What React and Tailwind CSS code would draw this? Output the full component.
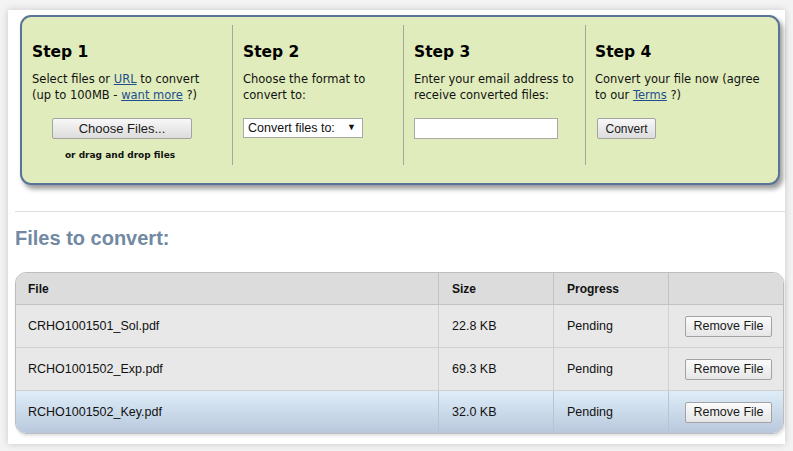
export default function App() {
  const rows = [
    { name: "CRHO1001501_Sol.pdf", size: "22.8 KB", sel: false },
    { name: "RCHO1001502_Exp.pdf", size: "69.3 KB", sel: false },
    { name: "RCHO1001502_Key.pdf", size: "32.0 KB", sel: true },
  ];
  const verdana = { fontFamily: '"DejaVu Sans", Verdana, sans-serif' };
  const arial = { fontFamily: '"Liberation Sans", Arial, sans-serif' };
  const link = "text-[#1f4f8f] underline";
  const btn =
    "flex items-center justify-center border border-[#a3a3a3] rounded-[2px] bg-gradient-to-b from-[#f8f8f8] to-[#dcdcdc] text-[#1a1a1a]";
  return (
    <div className="w-[793px] h-[451px] bg-[#f3f3f3] pt-[10px] pl-[8px]" style={arial}>
      <div className="w-[777px] h-[434px] bg-white shadow-[0_0_7px_rgba(0,0,0,0.18)] pt-[5px] flex flex-col">
        {/* Steps panel */}
        <div
          className="ml-[12px] w-[760px] h-[170px] rounded-[11px] border-2 border-[#5a7398] bg-[#e0ecbb] shadow-[3px_4px_5px_rgba(0,0,0,0.4)] flex items-start pt-[8px]"
          style={verdana}
        >
          <div className="w-[211px] h-[140px] border-r border-[#a4a89a] pl-[10px] pt-[18px]">
            <div className="text-[15.5px] leading-[18px] font-bold text-black">Step 1</div>
            <div className="mt-[10px] text-[11.5px] leading-[16px] text-[#111]">
              Select files or <span className={link}>URL</span> to convert
              <br />
              (up to 100MB - <span className={link}>want more</span> ?)
            </div>
            <div className={`${btn} mt-[15px] ml-[20px] w-[140px] h-[21px] text-[13px]`} style={arial}>
              Choose Files...
            </div>
            <div className="ml-[18px] w-[140px] text-center mt-[10px] text-[9px] leading-[12px] font-bold text-[#111]">
              or drag and drop files
            </div>
          </div>
          <div className="w-[171px] h-[140px] border-r border-[#a4a89a] pl-[10px] pt-[18px]">
            <div className="text-[15.5px] leading-[18px] font-bold text-black">Step 2</div>
            <div className="mt-[10px] text-[11.5px] leading-[16px] text-[#111]">
              Choose the format to
              <br />
              convert to:
            </div>
            <div
              className="mt-[15px] w-[120px] h-[20px] bg-white border border-[#a9a9a9] flex items-center justify-between pl-[4px] pr-[6px] text-[12.5px] text-[#111]"
              style={arial}
            >
              <span>Convert files to:</span>
              <span className="text-[9px]">▼</span>
            </div>
          </div>
          <div className="w-[182px] h-[140px] border-r border-[#a4a89a] pl-[10px] pt-[18px]">
            <div className="text-[15.5px] leading-[18px] font-bold text-black">Step 3</div>
            <div className="mt-[10px] text-[11.5px] leading-[16px] text-[#111]">
              Enter your email address to
              <br />
              receive converted files:
            </div>
            <input
              type="text"
              className="mt-[15px] block w-[144px] h-[21px] bg-white border border-[#a9a9a9] outline-none"
            />
          </div>
          <div className="flex-1 h-[140px] pl-[9px] pt-[18px]">
            <div className="text-[15.5px] leading-[18px] font-bold text-black">Step 4</div>
            <div className="mt-[10px] text-[11.5px] leading-[16px] text-[#111]">
              Convert your file now (agree
              <br />
              to our <span className={link}>Terms</span> ?)
            </div>
            <div className={`${btn} mt-[15px] ml-[2px] w-[59px] h-[21px] text-[12px]`} style={arial}>
              Convert
            </div>
          </div>
        </div>

        {/* Divider */}
        <div className="mt-[26px] ml-[7px] h-px bg-[#dddddd]" />

        {/* Heading */}
        <div className="mt-[14px] ml-[7px] text-[20px] leading-[24px] font-bold text-[#7189a3]">
          Files to convert:
        </div>

        {/* Table */}
        <div className="mt-[22px] ml-[7px] w-[769px] border border-[#bdbdbd] rounded-[11px] overflow-hidden shadow-[1px_2px_3px_rgba(0,0,0,0.12)]">
          <div className="grid grid-cols-[422px_115px_115px_1fr] h-[32px] bg-[#dcdcdc] border-b border-[#c2c2c2] text-[12px] font-bold text-[#111]">
            <div className="flex items-center pl-[12px]">File</div>
            <div className="flex items-center pl-[13px] border-l border-[#c2c2c2]">Size</div>
            <div className="flex items-center pl-[13px] border-l border-[#c2c2c2]">Progress</div>
            <div className="border-l border-[#c2c2c2]" />
          </div>
          {rows.map((r, i) => (
            <div
              key={r.name}
              className={`grid grid-cols-[422px_115px_115px_1fr] text-[12.5px] text-[#111] ${
                i < rows.length - 1 ? "h-[43px] border-b border-[#d0d0d0]" : "h-[42px]"
              } ${r.sel ? "bg-gradient-to-b from-[#deedf8] to-[#b9c8dc]" : "bg-[#e8e8e8]"}`}
            >
              <div className="flex items-center pl-[12px]">{r.name}</div>
              <div className={`flex items-center pl-[13px] border-l ${r.sel ? "border-[#b8c4d2]" : "border-[#d0d0d0]"}`}>
                {r.size}
              </div>
              <div className={`flex items-center pl-[13px] border-l ${r.sel ? "border-[#b8c4d2]" : "border-[#d0d0d0]"}`}>
                Pending
              </div>
              <div className={`flex items-center pl-[16px] border-l ${r.sel ? "border-[#b8c4d2]" : "border-[#d0d0d0]"}`}>
                <div className={`${btn} w-[87px] h-[21px] text-[12.5px] border-[#9a9a9a] from-[#fbfbfb] to-[#e6e6e6]`}>
                  Remove File
                </div>
              </div>
            </div>
          ))}
        </div>
      </div>
    </div>
  );
}
